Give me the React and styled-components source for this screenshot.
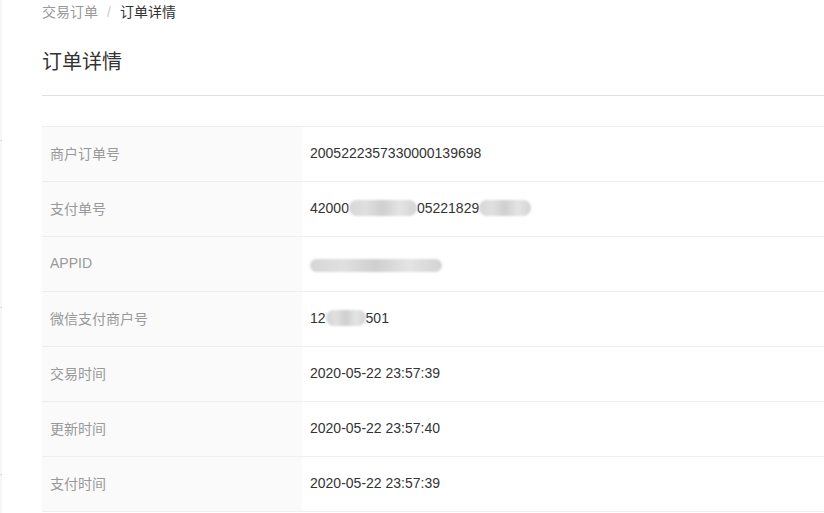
import React from 'react';
import styled, { createGlobalStyle } from 'styled-components';

const GlobalStyle = createGlobalStyle`
    html, body {
        margin: 0;
        padding: 0;
        background: #fff;
        font-family: "Liberation Sans", "Noto Sans CJK SC", sans-serif;
        color: #333;
    }
`;

const Layout = styled.div`
    display: flex;
    min-height: 513px;
    overflow: hidden;
`;

const SideEdge = styled.div`
    width: 2px;
    flex: none;
    background: #f6f6f6;
    display: flex;
    flex-direction: column;
    padding-top: 140px;
    gap: 166px;

    span {
        display: block;
        height: 1px;
        background: #dcdcdc;
    }
`;

const Main = styled.div`
    flex: 1;
    padding-left: 40px;
`;

const Crumbs = styled.div`
    display: flex;
    align-items: center;
    height: 24px;
    font-size: 14px;
    line-height: 24px;
`;

const Crumb = styled.span`
    color: ${p => (p.active ? '#333' : '#999')};
`;

const Sep = styled.span`
    color: #ccc;
    margin: 0 9px;
`;

const Title = styled.h1`
    margin: 0;
    padding: 25px 0 20px;
    font-size: 20px;
    font-weight: normal;
    line-height: 26px;
    color: #333;
    border-bottom: 1px solid #e2e2e2;
`;

const Table = styled.div`
    margin-top: 30px;
    border-top: 1px solid #eee;
`;

const Row = styled.div`
    display: flex;
    height: 54px;
    border-bottom: 1px solid #eee;
`;

const Label = styled.div`
    width: 260px;
    flex: none;
    background: #fafafa;
    padding: 0 0 2px 8px;
    box-sizing: border-box;
    display: flex;
    align-items: center;
    font-size: 14px;
    color: #999;
`;

const Value = styled.div`
    flex: 1;
    padding: 0 0 2px 8px;
    display: flex;
    align-items: center;
    font-size: 14px;
    color: #333;
    white-space: nowrap;
`;

const Mask = styled.span`
    display: inline-block;
    width: ${p => p.w}px;
    height: ${p => p.h || 16}px;
    margin-top: ${p => p.dy || 0}px;
    border-radius: 8px;
    background: linear-gradient(90deg, #d6d6d6, #e0e0e0 25%, #cfcfcf 50%, #e4e4e4 75%, #d3d3d3);
    filter: blur(1px);
`;

const rows = [
    { label: '商户订单号', value: '2005222357330000139698' },
    {
        label: '支付单号',
        value: (
            <>
                42000
                <Mask w={68} />
                05221829
                <Mask w={52} />
            </>
        ),
    },
    { label: 'APPID', value: <Mask w={132} h={13} dy={4} /> },
    {
        label: '微信支付商户号',
        value: (
            <>
                12
                <Mask w={40} />
                501
            </>
        ),
    },
    { label: '交易时间', value: '2020-05-22 23:57:39' },
    { label: '更新时间', value: '2020-05-22 23:57:40' },
    { label: '支付时间', value: '2020-05-22 23:57:39' },
];

export default function App() {
    return (
        <Layout>
            <GlobalStyle />
            <SideEdge>
                <span />
                <span />
                <span />
            </SideEdge>
            <Main>
                <Crumbs>
                    <Crumb>交易订单</Crumb>
                    <Sep>/</Sep>
                    <Crumb active>订单详情</Crumb>
                </Crumbs>
                <Title>订单详情</Title>
                <Table>
                    {rows.map(r => (
                        <Row key={r.label}>
                            <Label>{r.label}</Label>
                            <Value>{r.value}</Value>
                        </Row>
                    ))}
                </Table>
            </Main>
        </Layout>
    );
}
